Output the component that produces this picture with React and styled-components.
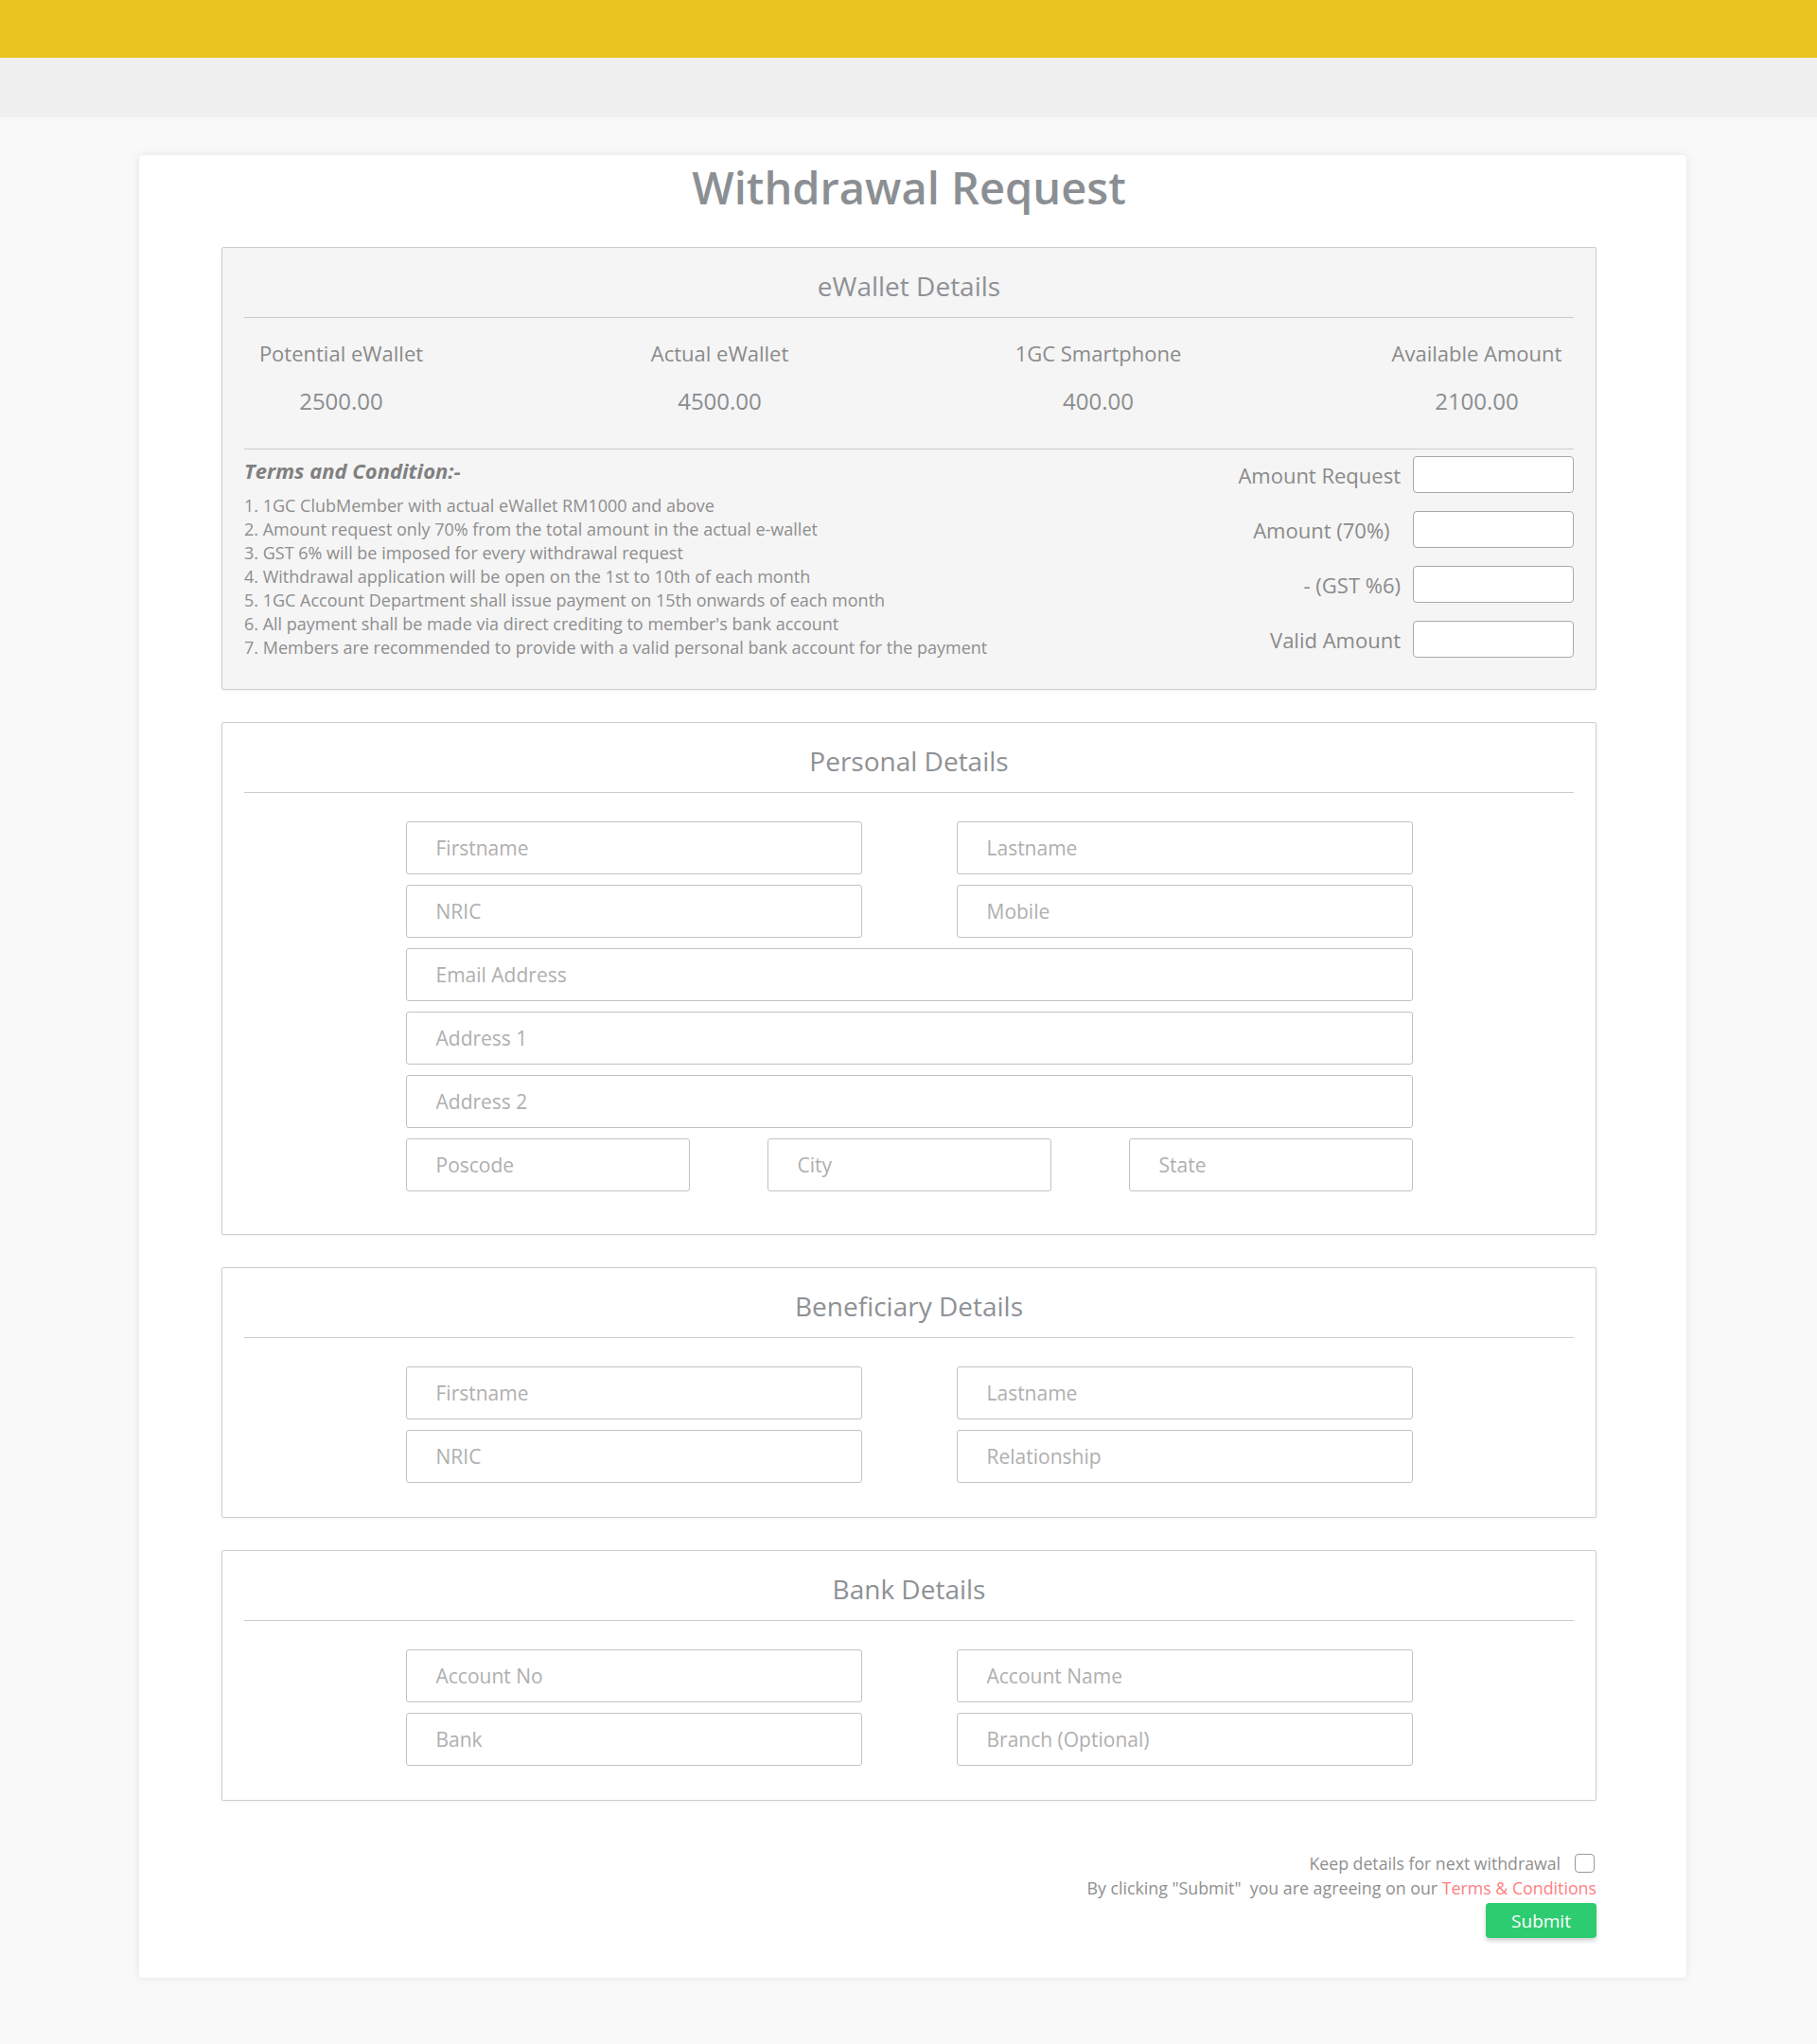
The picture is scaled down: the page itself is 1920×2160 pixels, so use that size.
import React from "react";
import styled, { createGlobalStyle } from "styled-components";

const GlobalStyle = createGlobalStyle`
  * { box-sizing: border-box; }
  html, body { margin: 0; padding: 0; }
  body {
    background: #f9f9f9;
    font-family: "Open Sans", "Liberation Sans", sans-serif;
    color: #8a8a8a;
  }
`;

const TopBar = styled.div`
  height: 61px;
  background: #e9c31f;
`;

const SubBar = styled.div`
  height: 63px;
  background: #f0f0f0;
`;

const Page = styled.div`
  padding: 40px 138px 70px 147px;
`;

const Card = styled.div`
  background: #fff;
  border-radius: 4px;
  box-shadow: 0 0 10px rgba(0, 0, 0, 0.09);
  padding: 5px 95px 42px 87px;
  display: flex;
  flex-direction: column;
`;

const Title = styled.h1`
  margin: 0 0 34px;
  text-align: center;
  font-size: 47px;
  line-height: 58px;
  font-weight: 600;
  color: #8b8f93;
`;

const Box = styled.section`
  border: 1px solid #cdcdcd;
  border-radius: 2px;
  background: ${(p) => (p.$shaded ? "#f5f5f5" : "#fff")};
  box-shadow: 0 1px 3px rgba(0, 0, 0, 0.06);
  padding: 0 23px ${(p) => p.$pb || 0}px;
  & + & {
    margin-top: ${(p) => p.$mt || 34}px;
  }
`;

const BoxTitle = styled.h2`
  margin: 0;
  padding: 21px 0 14px;
  border-bottom: 1px solid #cccccc;
  text-align: center;
  font-size: 28px;
  line-height: 38px;
  font-weight: 400;
  color: #8e9195;
`;

const Stats = styled.div`
  display: grid;
  grid-template-columns: repeat(4, 200px);
  column-gap: 200px;
  row-gap: 20px;
  justify-content: center;
  padding: 22px 0 34px;
  border-bottom: 1px solid #cccccc;
`;

const StatLabel = styled.div`
  text-align: center;
  white-space: nowrap;
  font-size: 22px;
  line-height: 30px;
  color: #8a8a8a;
`;

const StatValue = styled.div`
  text-align: center;
  font-size: 24px;
  line-height: 32px;
  color: #8a8d90;
`;

const Lower = styled.div`
  display: flex;
  justify-content: space-between;
  align-items: flex-start;
  padding-top: 7px;
  padding-bottom: 31px;
`;

const Terms = styled.div`
  display: flex;
  flex-direction: column;
`;

const TermsHead = styled.div`
  font-size: 22px;
  line-height: 30px;
  font-weight: 700;
  font-style: italic;
  color: #808080;
  margin-bottom: 10px;
`;

const TermsList = styled.ol`
  margin: 0;
  padding: 0;
  list-style: none;
`;

const TermItem = styled.li`
  font-size: 18px;
  line-height: 25px;
  color: #8e8e8e;
`;

const Calc = styled.div`
  display: flex;
  flex-direction: column;
  gap: 19px;
`;

const CalcRow = styled.label`
  display: flex;
  align-items: center;
  justify-content: flex-end;
  gap: 13px;
`;

const CalcLabel = styled.span`
  font-size: 22px;
  line-height: 30px;
  color: #8a8a8a;
  white-space: pre;
`;

const CalcInput = styled.input`
  width: 170px;
  height: 39px;
  border: 1px solid #a9a9a9;
  border-radius: 4px;
  background: #fff;
  outline: none;
`;

const Fields = styled.div`
  width: 1064px;
  margin: 0 auto;
  padding-top: 30px;
  display: flex;
  flex-direction: column;
  gap: 11px;
`;

const FieldRow = styled.div`
  display: grid;
  grid-template-columns: ${(p) =>
    p.$cols === 3 ? "repeat(3, 300px)" : p.$cols === 2 ? "repeat(2, 482px)" : "1fr"};
  justify-content: space-between;
`;

const Field = styled.input`
  width: 100%;
  height: 56px;
  border: 1px solid #c2c2c2;
  border-radius: 3px;
  background: #fff;
  padding: 0 31px;
  font-family: "Open Sans", "Liberation Sans", sans-serif;
  font-size: 21px;
  color: #777;
  outline: none;
  &::placeholder {
    color: #afafaf;
    opacity: 1;
  }
`;

const Footer = styled.div`
  margin-top: 53px;
  display: flex;
  flex-direction: column;
  align-items: flex-end;
`;

const KeepRow = styled.label`
  display: flex;
  align-items: center;
  gap: 15px;
  padding-right: 2px;
  font-size: 17.7px;
  line-height: 26px;
  color: #8f8f8f;
`;

const Check = styled.input`
  appearance: none;
  -webkit-appearance: none;
  margin: 0;
  width: 21px;
  height: 20px;
  border: 1.5px solid #9a9a9a;
  border-radius: 4px;
  background: #fff;
`;

const Agree = styled.p`
  margin: 0;
  font-size: 17.8px;
  line-height: 26px;
  color: #8f8f8f;
  white-space: pre;
`;

const TermsLink = styled.a`
  color: #ff7f7f;
  text-decoration: none;
`;

const Submit = styled.button`
  margin-top: 3px;
  width: 117px;
  height: 37px;
  border: none;
  border-radius: 4px;
  background: #2ecc71;
  color: #fff;
  font-family: "Open Sans", "Liberation Sans", sans-serif;
  font-size: 19px;
  font-weight: 500;
  box-shadow: 0 3px 5px rgba(0, 0, 0, 0.18);
  cursor: pointer;
`;

const stats = [
  ["Potential eWallet", "2500.00"],
  ["Actual eWallet", "4500.00"],
  ["1GC Smartphone", "400.00"],
  ["Available Amount", "2100.00"],
];

const terms = [
  "1. 1GC ClubMember with actual eWallet RM1000 and above",
  "2. Amount request only 70% from the total amount in the actual e-wallet",
  "3. GST 6% will be imposed for every withdrawal request",
  "4. Withdrawal application will be open on the 1st to 10th of each month",
  "5. 1GC Account Department shall issue payment on 15th onwards of each month",
  "6. All payment shall be made via direct crediting to member's bank account",
  "7. Members are recommended to provide with a valid personal bank account for the payment",
];

const calcs = ["Amount Request", "Amount (70%)  ", "- (GST %6)", "Valid Amount"];

function FormBox({ title, rows, pb, mt }) {
  return (
    <Box $pb={pb} $mt={mt}>
      <BoxTitle>{title}</BoxTitle>
      <Fields>
        {rows.map((row, i) => (
          <FieldRow key={i} $cols={row.length}>
            {row.map((ph) => (
              <Field key={ph} placeholder={ph} />
            ))}
          </FieldRow>
        ))}
      </Fields>
    </Box>
  );
}

export default function App() {
  return (
    <>
      <GlobalStyle />
      <TopBar />
      <SubBar />
      <Page>
        <Card>
          <Title>Withdrawal Request</Title>
          <div>
            <Box $shaded>
              <BoxTitle>eWallet Details</BoxTitle>
              <Stats>
                {stats.map(([l]) => (
                  <StatLabel key={l}>{l}</StatLabel>
                ))}
                {stats.map(([l, v]) => (
                  <StatValue key={l}>{v}</StatValue>
                ))}
              </Stats>
              <Lower>
                <Terms>
                  <TermsHead>Terms and Condition:-</TermsHead>
                  <TermsList>
                    {terms.map((t) => (
                      <TermItem key={t}>{t}</TermItem>
                    ))}
                  </TermsList>
                </Terms>
                <Calc>
                  {calcs.map((c) => (
                    <CalcRow key={c}>
                      <CalcLabel>{c}</CalcLabel>
                      <CalcInput type="text" />
                    </CalcRow>
                  ))}
                </Calc>
              </Lower>
            </Box>
            <FormBox
              title="Personal Details"
              pb={45}
              mt={33}
              rows={[
                ["Firstname", "Lastname"],
                ["NRIC", "Mobile"],
                ["Email Address"],
                ["Address 1"],
                ["Address 2"],
                ["Poscode", "City", "State"],
              ]}
            />
            <FormBox
              title="Beneficiary Details"
              pb={36}
              rows={[
                ["Firstname", "Lastname"],
                ["NRIC", "Relationship"],
              ]}
            />
            <FormBox
              title="Bank Details"
              pb={36}
              rows={[
                ["Account No", "Account Name"],
                ["Bank", "Branch (Optional)"],
              ]}
            />
          </div>
          <Footer>
            <KeepRow>
              Keep details for next withdrawal
              <Check type="checkbox" />
            </KeepRow>
            <Agree>
              {'By clicking "Submit"  you are agreeing on our '}
              <TermsLink href="#">Terms &amp; Conditions</TermsLink>
            </Agree>
            <Submit type="button">Submit</Submit>
          </Footer>
        </Card>
      </Page>
    </>
  );
}
